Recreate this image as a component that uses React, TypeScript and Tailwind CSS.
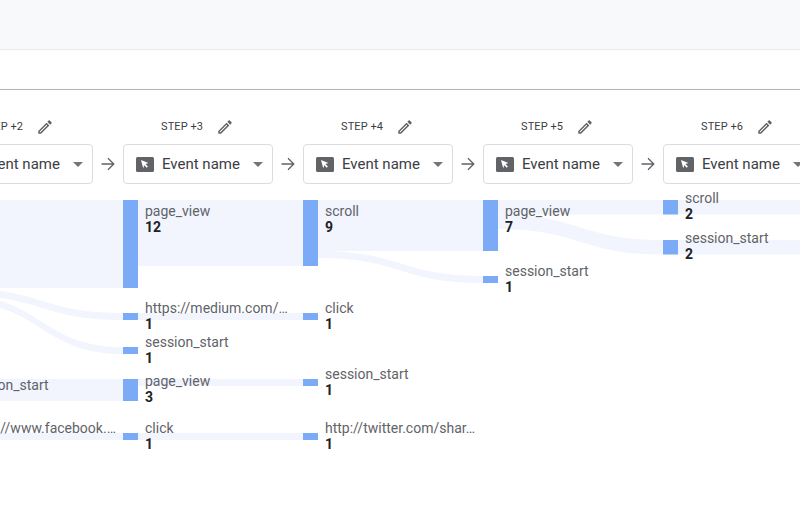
import { Fragment } from "react"

const steps = [2, 3, 4, 5, 6]

// y values are relative to the top of the chart (y=200 on the page)
const flows = [
	{ x0: -42, x1: 123, a0: 0, b0: 88, a1: 0, b1: 88 },
	{ x0: -42, x1: 123, a0: 88, b0: 95, a1: 113, b1: 120 },
	{ x0: -42, x1: 123, a0: 95, b0: 102, a1: 147, b1: 154 },
	{ x0: -42, x1: 123, a0: 179, b0: 201, a1: 179, b1: 201 },
	{ x0: -42, x1: 123, a0: 233, b0: 240, a1: 233, b1: 240 },
	{ x0: 138, x1: 303, a0: 0, b0: 66, a1: 0, b1: 66 },
	{ x0: 138, x1: 303, a0: 113, b0: 120, a1: 113, b1: 120 },
	{ x0: 138, x1: 303, a0: 179, b0: 186, a1: 179, b1: 186 },
	{ x0: 138, x1: 303, a0: 233, b0: 240, a1: 233, b1: 240 },
	{ x0: 318, x1: 483, a0: 0, b0: 51, a1: 0, b1: 51 },
	{ x0: 318, x1: 483, a0: 51, b0: 58, a1: 76, b1: 83 },
	{ x0: 498, x1: 663, a0: 0, b0: 14.5, a1: 0, b1: 14.5 },
	{ x0: 498, x1: 663, a0: 14.5, b0: 29, a1: 40, b1: 54.5 },
	{ x0: 678, x1: 843, a0: 0, b0: 14.5, a1: 0, b1: 14.5 },
	{ x0: 678, x1: 843, a0: 40, b0: 54.5, a1: 40, b1: 54.5 },
]

const nodes = [
	{ x: 123, y: 0, h: 88 },
	{ x: 123, y: 113, h: 7 },
	{ x: 123, y: 147, h: 7 },
	{ x: 123, y: 179, h: 22 },
	{ x: 123, y: 233, h: 7 },
	{ x: 303, y: 0, h: 66 },
	{ x: 303, y: 113, h: 7 },
	{ x: 303, y: 179, h: 7 },
	{ x: 303, y: 233, h: 7 },
	{ x: 483, y: 0, h: 51 },
	{ x: 483, y: 76, h: 7 },
	{ x: 663, y: 0, h: 14.5 },
	{ x: 663, y: 40, h: 14.5 },
]

const labels = [
	{ x: -35, y: 177, name: "session_start", value: "3" },
	{ x: -35, y: 220, name: "https://www.facebook.…", value: "1" },
	{ x: 145, y: 3, name: "page_view", value: "12" },
	{ x: 145, y: 100, name: "https://medium.com/…", value: "1" },
	{ x: 145, y: 134, name: "session_start", value: "1" },
	{ x: 145, y: 173, name: "page_view", value: "3" },
	{ x: 145, y: 220, name: "click", value: "1" },
	{ x: 325, y: 3, name: "scroll", value: "9" },
	{ x: 325, y: 100, name: "click", value: "1" },
	{ x: 325, y: 166, name: "session_start", value: "1" },
	{ x: 325, y: 220, name: "http://twitter.com/shar…", value: "1" },
	{ x: 505, y: 3, name: "page_view", value: "7" },
	{ x: 505, y: 63, name: "session_start", value: "1" },
	{ x: 685, y: -10, name: "scroll", value: "2" },
	{ x: 685, y: 30, name: "session_start", value: "2" },
]

function ribbon(f: (typeof flows)[number]) {
	const mid = (f.x0 + f.x1) / 2
	return `M${f.x0} ${f.a0}C${mid} ${f.a0} ${mid} ${f.a1} ${f.x1} ${f.a1}L${f.x1} ${f.b1}C${mid} ${f.b1} ${mid} ${f.b0} ${f.x0} ${f.b0}Z`
}

function PencilIcon() {
	return (
		<svg
			width="18"
			height="18"
			viewBox="0 0 24 24"
			fill="#5f6368"
		>
			<path d="M14.06 9.02l.92.92L5.92 19H5v-.92l9.06-9.06M17.66 3c-.25 0-.51.1-.7.29l-1.83 1.83 3.75 3.75 1.83-1.83c.39-.39.39-1.02 0-1.41l-2.34-2.34c-.2-.2-.45-.29-.71-.29zm-3.6 3.19L3 17.25V21h3.75L17.81 9.94l-3.75-3.75z" />
		</svg>
	)
}

function CursorIcon() {
	return (
		<svg
			width="18"
			height="15"
			viewBox="0 0 18 15"
			className="shrink-0"
		>
			<rect
				width="18"
				height="15"
				rx="1.5"
				fill="#616367"
			/>
			<path
				d="M5 3l7.4 3-2.9 1.1 2.4 2.5-1.2 1.2-2.4-2.5-1.1 2.9z"
				fill="#fff"
			/>
		</svg>
	)
}

function ArrowIcon() {
	return (
		<svg
			width="14"
			height="14"
			viewBox="0 0 14 14"
			fill="none"
			stroke="#5f6368"
			strokeWidth="1.3"
		>
			<path d="M0.5 7h12M7 1.2 12.8 7 7 12.8" />
		</svg>
	)
}

export default function App() {
	return (
		<div className="flex h-[505px] w-[800px] flex-col overflow-hidden bg-white font-['Roboto',sans-serif]">
			<div className="h-[50px] shrink-0 border-b border-[#e8eaed] bg-[#f8f9fa]" />
			<div className="h-[40px] shrink-0 border-b border-[#b4b4b4]" />

			{/* Step headers */}
			<div className="ml-[-57px] mt-[27px] flex shrink-0">
				{steps.map(step => (
					<Fragment key={step}>
						<div className="w-[150px] shrink-0">
							<div className="flex h-[20px] items-center pl-[38px]">
								<span className="w-[55px] whitespace-nowrap text-[11px] font-normal tracking-[0.1px] text-[#3c4043]">
									STEP +{step}
								</span>
								<PencilIcon />
							</div>
							<div className="mt-[7px] flex h-[40px] items-center rounded border border-[#dadce0] pl-[12px]">
								<CursorIcon />
								<span className="ml-[8px] whitespace-nowrap text-[15px] text-[#3c4043]">
									Event name
								</span>
								<span className="ml-[13px] h-0 w-0 border-x-[5px] border-t-[5px] border-x-transparent border-t-[#757575]" />
							</div>
						</div>
						<div className="flex w-[30px] shrink-0 items-center justify-center pt-[27px]">
							<ArrowIcon />
						</div>
					</Fragment>
				))}
			</div>

			{/* Sankey chart */}
			<div className="relative mt-[16px] flex-1">
				<svg
					className="absolute inset-0"
					width="800"
					height="305"
					viewBox="0 0 800 305"
				>
					{flows.map((f, i) => (
						<path
							key={i}
							d={ribbon(f)}
							fill="#f2f5fe"
						/>
					))}
					{nodes.map((n, i) => (
						<rect
							key={i}
							x={n.x}
							y={n.y}
							width="15"
							height={n.h}
							fill="#7baaf7"
						/>
					))}
				</svg>
				{labels.map((l, i) => (
					<div
						key={i}
						className="absolute w-[150px] text-[14px] leading-[16px]"
						style={{ left: l.x, top: l.y }}
					>
						<div className="whitespace-nowrap text-[#5f6368]">{l.name}</div>
						<div className="font-bold text-[#202124]">{l.value}</div>
					</div>
				))}
			</div>
		</div>
	)
}
